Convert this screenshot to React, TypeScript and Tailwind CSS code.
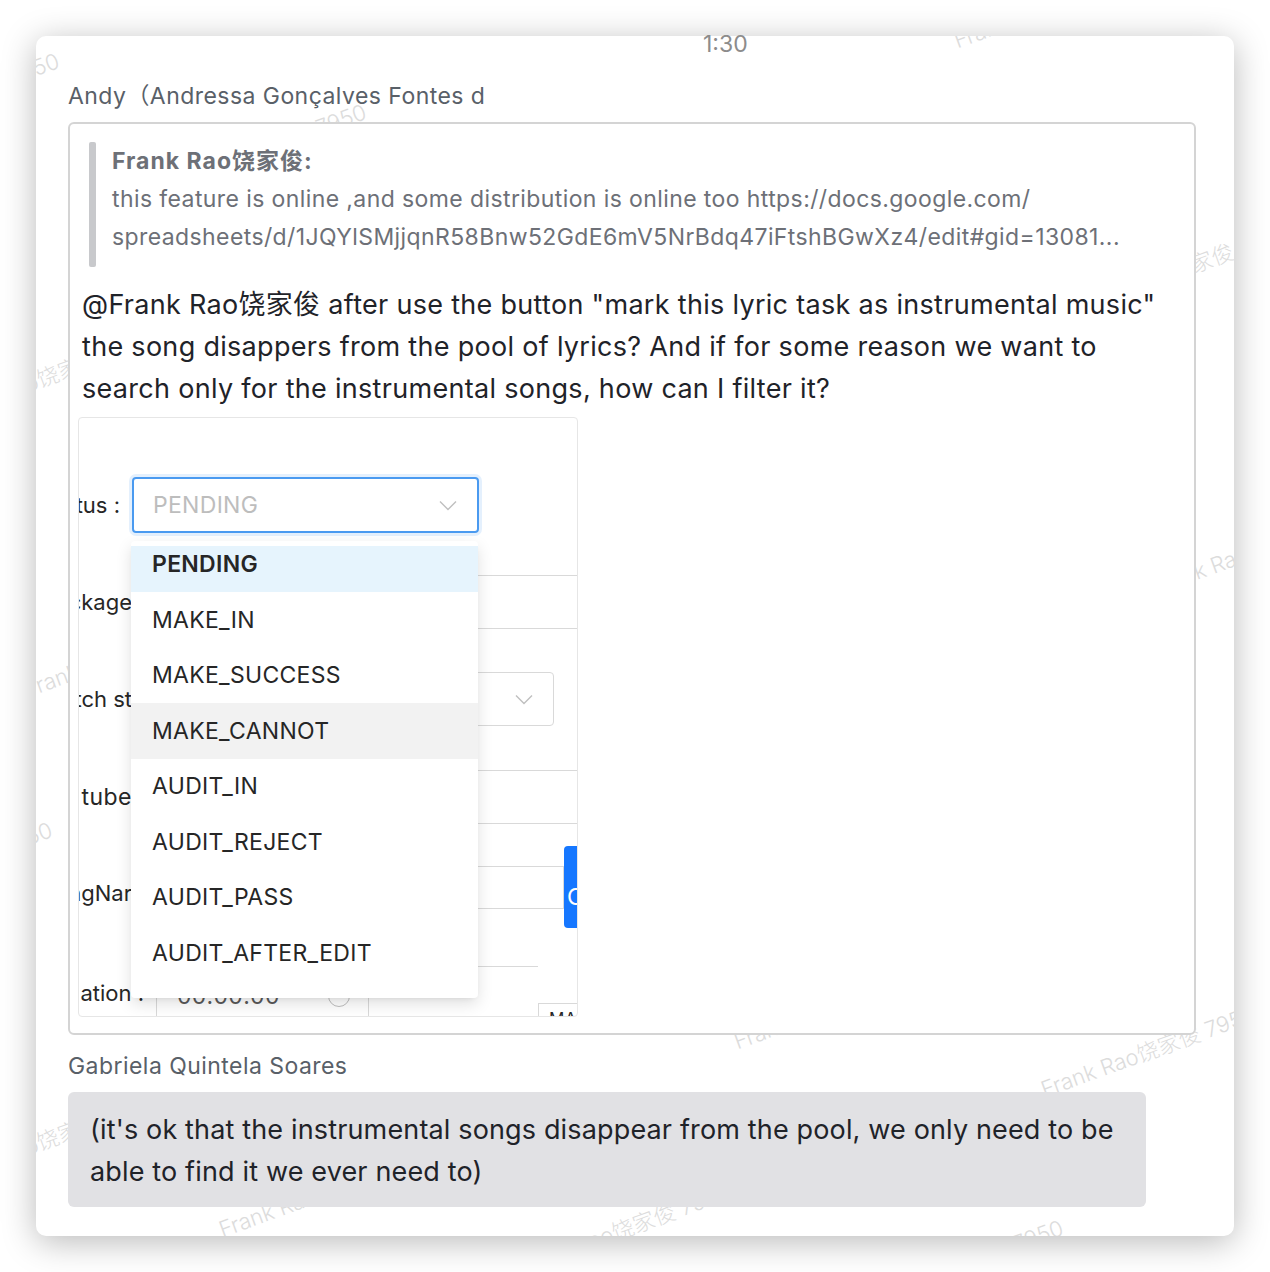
const WATERMARKS = [
  { left: -190, top: 85 },
  { left: 117, top: 136 },
  { left: 919, top: -11 },
  { left: 1039, top: 256 },
  { left: -94, top: 363 },
  { left: 1116, top: 536 },
  { left: -11, top: 638 },
  { left: -197, top: 854 },
  { left: 699, top: 990 },
  { left: 1006, top: 1038 },
  { left: -94, top: 1126 },
  { left: 184, top: 1178 },
  { left: 481, top: 1216 },
  { left: 814, top: 1252 },
];

const OPTIONS = [
  "MAKE_IN",
  "MAKE_SUCCESS",
  "MAKE_CANNOT",
  "AUDIT_IN",
  "AUDIT_REJECT",
  "AUDIT_PASS",
  "AUDIT_AFTER_EDIT",
];

const Chevron = ({ className }: { className?: string }) => (
  <svg width="18" height="11" viewBox="0 0 18 11" className={className} fill="none">
    <path d="M1 1.5 L9 9.5 L17 1.5" stroke="#bfbfbf" strokeWidth="1.4" />
  </svg>
);

// cropped screenshot of the admin form with the status dropdown open
const FormShot = () => {
  return (
    <div className="relative mt-[7px] ml-[-2px] h-[600px] w-[500px] overflow-hidden rounded-[4px] border border-[#e6e6e6] bg-white text-[23px] tracking-[0.3px] text-[#262626]">
      <div className="flex flex-col">
        {/* status */}
        <div className="mt-[59px] flex h-[56px] items-center">
          <div className="flex w-[53px] shrink-0 justify-end overflow-hidden pr-[12px] text-[22px] tracking-normal">
            <span className="whitespace-nowrap">Status :</span>
          </div>
          <div className="flex h-[56px] w-[347px] items-center justify-between rounded-[4px] border-2 border-[#4a9af0] pl-[19px] pr-[20px] shadow-[0_0_0_3px_rgba(74,154,240,0.15)]">
            <span className="text-[#bdbdbd]">PENDING</span>
            <Chevron />
          </div>
        </div>

        {/* package */}
        <div className="mt-[42px] flex h-[54px] items-center">
          <div className="flex w-[53px] shrink-0 justify-end overflow-hidden text-[22px] tracking-normal">
            <span className="whitespace-nowrap">Package</span>
          </div>
          <div className="h-[54px] w-[480px] shrink-0 border border-[#d9d9d9]" />
        </div>

        {/* match status */}
        <div className="mt-[43px] flex h-[54px] items-center">
          <div className="flex w-[53px] shrink-0 justify-end overflow-hidden text-[22px] tracking-normal">
            <span className="whitespace-nowrap">Match st</span>
          </div>
          <div className="flex h-[54px] w-[422px] shrink-0 items-center justify-end rounded-[4px] border border-[#d9d9d9] pr-[20px]">
            <Chevron />
          </div>
        </div>

        {/* youtube */}
        <div className="mt-[44px] flex h-[54px] items-center">
          <div className="flex w-[53px] shrink-0 justify-end overflow-hidden text-[23px] tracking-[0.5px]">
            <span className="whitespace-nowrap">tube</span>
          </div>
          <div className="h-[54px] w-[480px] shrink-0 border border-[#d9d9d9]" />
        </div>

        {/* song name */}
        <div className="mt-[22px] flex h-[82px] items-center">
          <div className="flex w-[53px] shrink-0 justify-end overflow-hidden pt-[12px] text-[22px] tracking-normal">
            <span className="whitespace-nowrap">SongNar</span>
          </div>
          <div className="h-[43px] w-[432px] shrink-0 border border-[#d9d9d9]" />
          <div className="flex h-[82px] w-[80px] shrink-0 items-center rounded-[4px] bg-[#1677ff] pl-[3px] pt-[20px] text-white">
            Clear
          </div>
        </div>

        {/* duration */}
        <div className="mt-[38px] flex h-[60px] items-start">
          <div className="flex w-[77px] shrink-0 justify-end overflow-hidden pr-[12px] pt-[11px] text-[22px] tracking-normal">
            <span className="whitespace-nowrap">ation :</span>
          </div>
          <div className="flex h-[60px] w-[213px] shrink-0 items-center justify-between border border-[#d9d9d9] pl-[20px] pr-[18px]">
            <span className="text-[#595959]">00:00:00</span>
            <span className="h-[22px] w-[22px] rounded-full border border-[#bfbfbf]" />
          </div>
          <div className="h-[60px] w-[169px] shrink-0 border-y border-[#d9d9d9]" />
          <div className="mt-[37px] flex h-[30px] w-[50px] shrink-0 items-start border border-[#d9d9d9] pl-[10px] pt-[3px] text-[17px]">
            MAKE
          </div>
        </div>
      </div>

      {/* open dropdown */}
      <div className="absolute left-[52px] top-[123px] w-[347px] rounded-[4px] bg-white pb-[17px] pt-[5px] shadow-[0_6px_16px_rgba(0,0,0,0.12),0_3px_6px_-4px_rgba(0,0,0,0.12)]">
        <div className="flex h-[46px] items-center bg-[#e6f4fd] pb-[10px] pl-[21px] font-semibold">PENDING</div>
        {OPTIONS.map((opt) => (
          <div
            key={opt}
            className={
              opt === "MAKE_CANNOT"
                ? "flex h-[55.5px] items-center bg-[#f2f2f2] pl-[21px]"
                : "flex h-[55.5px] items-center pl-[21px]"
            }
          >
            {opt}
          </div>
        ))}
      </div>
    </div>
  );
};

export default function App() {
  return (
    <div className="h-[1272px] w-[1270px] bg-white p-[36px] font-['Inter','Noto_Sans_CJK_SC',sans-serif]">
      <div className="relative h-[1200px] w-[1198px] rounded-[10px] bg-white shadow-[0_6px_34px_rgba(0,0,0,0.28)]">
        {/* watermark layer */}
        <div className="absolute inset-0 overflow-hidden rounded-[10px]">
          {WATERMARKS.map((w, i) => (
            <span
              key={i}
              className="absolute origin-left -rotate-[20deg] whitespace-nowrap text-[22px] font-light text-[#dcdcdc]"
              style={{ left: w.left, top: w.top }}
            >
              Frank Rao饶家俊 7950
            </span>
          ))}
        </div>

        <div className="relative flex flex-col px-[32px]">
          <div className="-mt-[4px] h-[24px] pl-[635px] text-[23px] leading-[24px] text-[#8c8c8c]">1:30</div>

          <div className="mt-[28px] h-[24px] text-[23px] leading-[24px] tracking-[0.45px] text-[#596068]">
            Andy（Andressa Gonçalves Fontes d
          </div>

          {/* quoted reply */}
          <div className="mt-[14px] flex h-[913px] w-[1128px] flex-col rounded-[6px] border-2 border-[#d4d4d4] bg-white px-[10px] pt-[18px]">
            <div className="ml-[9px] flex">
              <div className="w-[7px] shrink-0 rounded-[2px] bg-[#c8c9cc]" />
              <div className="pb-[11px] pl-[16px] text-[23px] leading-[38px] tracking-[0.4px] text-[#6d7077]">
                <div className="font-bold tracking-[1px]">Frank Rao饶家俊:</div>
                <div className="whitespace-nowrap">
                  this feature is online ,and some distribution is online too https://docs.google.com/
                </div>
                <div className="whitespace-nowrap">
                  spreadsheets/d/1JQYlSMjjqnR58Bnw52GdE6mV5NrBdq47iFtshBGwXz4/edit#gid=13081...
                </div>
              </div>
            </div>

            <div className="mt-[17px] pl-[2px] text-[27px] leading-[42px] tracking-[0.3px] text-[#1f2329]">
              <div className="whitespace-nowrap">
                @Frank Rao饶家俊 after use the button "mark this lyric task as instrumental music"
              </div>
              <div className="whitespace-nowrap">
                the song disappers from the pool of lyrics? And if for some reason we want to
              </div>
              <div className="whitespace-nowrap">search only for the instrumental songs, how can I filter it?</div>
            </div>

            <FormShot />
          </div>

          <div className="mt-[19px] h-[24px] text-[23px] leading-[24px] tracking-[0.45px] text-[#596068]">
            Gabriela Quintela Soares
          </div>

          <div className="mt-[14px] w-[1078px] rounded-[6px] bg-[#e1e1e4] pb-[14px] pl-[22px] pt-[17px] text-[27px] leading-[42px] tracking-[0.15px] text-[#1f2329]">
            <div className="whitespace-nowrap">
              (it's ok that the instrumental songs disappear from the pool, we only need to be
            </div>
            <div className="whitespace-nowrap">able to find it we ever need to)</div>
          </div>
        </div>
      </div>
    </div>
  );
}
